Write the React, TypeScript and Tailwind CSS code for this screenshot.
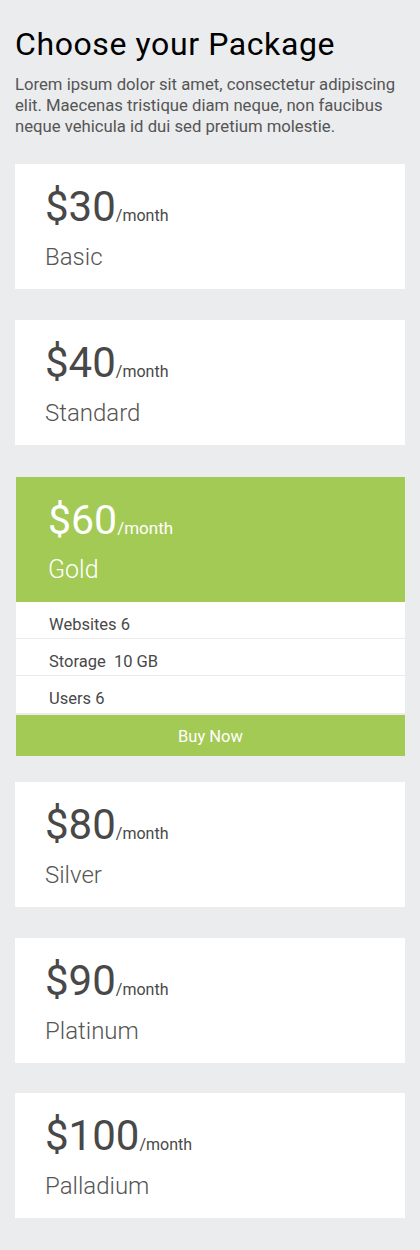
import React from "react";

type Plan = {
  price: string;
  name: string;
  featured?: boolean;
  mt: string;
};

const plans: Plan[] = [
  { price: "$30", name: "Basic", mt: "mt-[27px]" },
  { price: "$40", name: "Standard", mt: "mt-[31px]" },
  { price: "$60", name: "Gold", featured: true, mt: "mt-[32px]" },
  { price: "$80", name: "Silver", mt: "mt-[26px]" },
  { price: "$90", name: "Platinum", mt: "mt-[31px]" },
  { price: "$100", name: "Palladium", mt: "mt-[30px]" },
];

const features = ["Websites 6", "Storage  10 GB", "Users 6"];

const PlanCard = ({ plan }: { plan: Plan }) => {
  if (plan.featured) {
    return (
      <div className={`${plan.mt} ml-px flex flex-col`}>
        {/* green header */}
        <div className="h-[125px] bg-[#a4ca56] pl-[32px] pt-[17px] text-white">
          <div className="flex items-baseline">
            <span className="text-[41px] leading-[52px] font-normal">{plan.price}</span>
            <span className="text-[17px]">/month</span>
          </div>
          <div className="mt-[9px] text-[25px] leading-[30px] font-light">{plan.name}</div>
        </div>
        <ul className="bg-white">
          {features.map((f, i) => (
            <li
              key={f}
              className={`h-[37px] pl-[33px] pt-[13px] text-[16.5px] leading-[20px] text-[#484848] whitespace-pre ${
                i < features.length - 1 ? "border-b border-[#e9eaec]" : ""
              }`}
            >
              {f}
            </li>
          ))}
        </ul>
        <button className="mt-[2px] h-[41px] bg-[#a4ca56] pt-[3px] text-white text-[16.5px]">
          Buy Now
        </button>
      </div>
    );
  }

  return (
    <div className={`${plan.mt} h-[125px] bg-white pl-[30px] pt-[17px] text-[#484848]`}>
      <div className="flex items-baseline">
        <span className="text-[42px] leading-[52px] font-normal">{plan.price}</span>
        <span className="text-[16px]">/month</span>
      </div>
      <div className="mt-[9px] text-[24px] leading-[30px] font-light text-[#555]">{plan.name}</div>
    </div>
  );
};

const App = () => {
  return (
    <div
      className="min-h-[1250px] bg-[#ebecee] px-[15px] pt-[25px] pb-[32px]"
      style={{ fontFamily: "Roboto, 'Liberation Sans', sans-serif" }}
    >
      <h1 className="text-[32px] leading-[38px] text-black tracking-[0.6px]">Choose your Package</h1>
      <p className="mt-[11px] text-[16.7px] leading-[21px] text-[#555] whitespace-pre-line">
        {"Lorem ipsum dolor sit amet, consectetur adipiscing\nelit. Maecenas tristique diam neque, non faucibus\nneque vehicula id  dui sed pretium molestie."}
      </p>
      <div className="flex flex-col">
        {plans.map((p) => (
          <PlanCard key={p.name} plan={p} />
        ))}
      </div>
    </div>
  );
};

export default App;
